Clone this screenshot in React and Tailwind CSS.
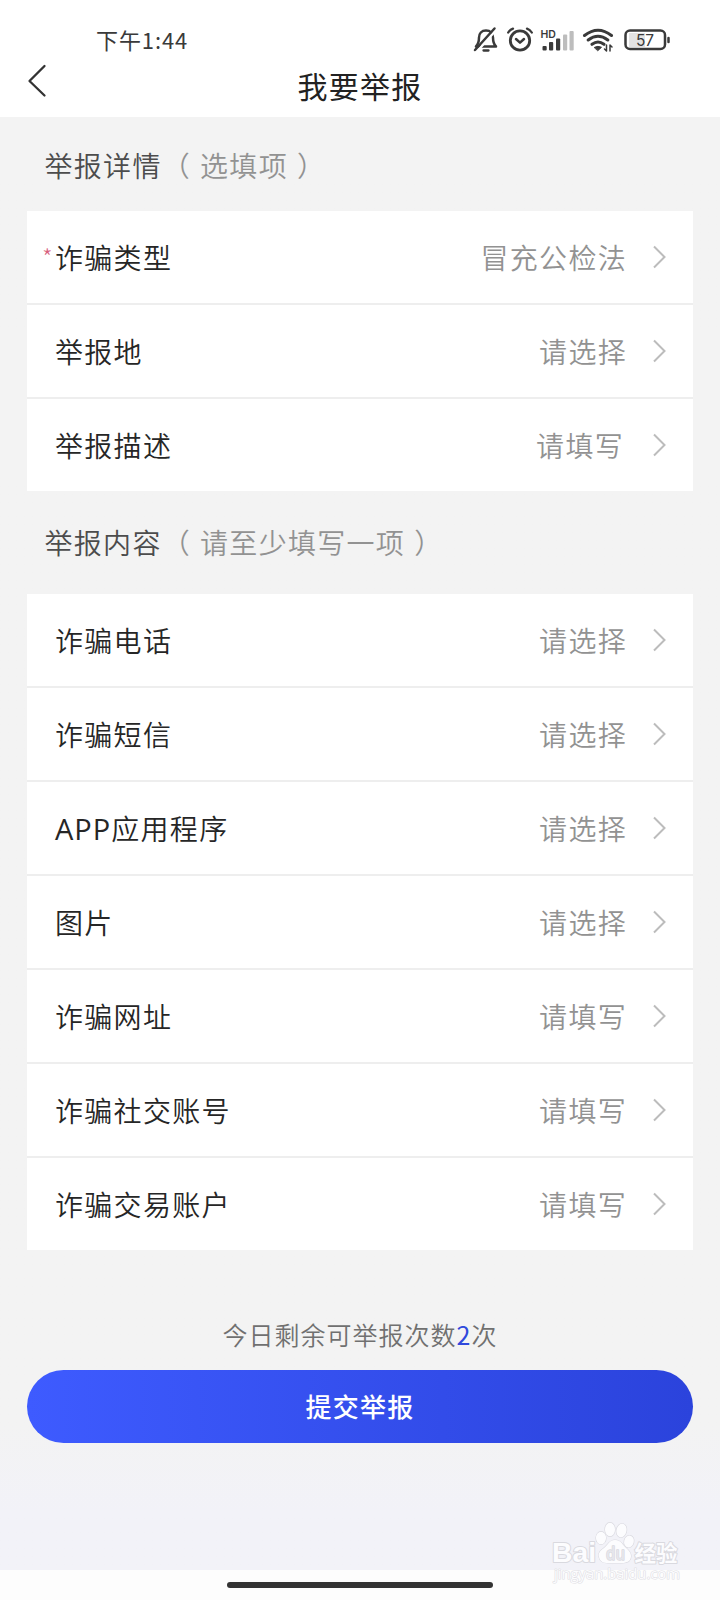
import React from "react";

const details = [
  { label: "诈骗类型", value: "冒充公检法", required: true },
  { label: "举报地", value: "请选择" },
  { label: "举报描述", value: "请填写", inset: true },
];

const contents = [
  { label: "诈骗电话", value: "请选择" },
  { label: "诈骗短信", value: "请选择" },
  { prefix: "APP", label: "应用程序", value: "请选择" },
  { label: "图片", value: "请选择" },
  { label: "诈骗网址", value: "请填写" },
  { label: "诈骗社交账号", value: "请填写" },
  { label: "诈骗交易账户", value: "请填写" },
];

function StatusIcons() {
  return (
    <svg width="200" height="30" viewBox="0 0 200 30" fill="none" stroke="#3a3a3a" strokeLinecap="round" strokeLinejoin="round">
      {/* muted bell */}
      <path d="M6 20.500h20c-2.500-2.500-3-4.500-3-9 0-4-2.500-7-7-7s-7 3-7 7c0 4.500-.5 6.500-3 9z" strokeWidth="2.500" />
      <path d="M13.500 24.500h5" strokeWidth="2.300" />
      <path d="M7 25.500 26 4" stroke="#fff" strokeWidth="2.500" />
      <path d="M5 24 24.500 2.500" strokeWidth="2.500" />
      {/* alarm clock */}
      <circle cx="50" cy="14.500" r="9.700" strokeWidth="2.800" />
      <path d="m46 13 4 3.700 4-3.700" strokeWidth="2.500" />
      <path d="M38.200 6.500q1.800-2.800 4.800-3.900M61.800 6.500q-1.800-2.800-4.800-3.900" strokeWidth="2.300" />
      {/* signal bars */}
      <g stroke="none">
        <rect x="72.500" y="20" width="4.200" height="4.500" rx="1" fill="#3a3a3a" />
        <rect x="79" y="16" width="4.200" height="8.500" rx="1" fill="#3a3a3a" />
        <rect x="86" y="12.500" width="4.200" height="12" rx="1" fill="#3a3a3a" />
        <rect x="93" y="8.500" width="4.200" height="16" rx="1" fill="#bdbdbd" />
        <rect x="99.500" y="5" width="4.200" height="19.500" rx="1" fill="#bdbdbd" />
        <text x="70.500" y="11.500" fill="#3a3a3a" fontSize="10.500" fontWeight="600" fontFamily="Inter, sans-serif">HD</text>
      </g>
      {/* wifi with data arrows */}
      <path d="M114.500 9.500q13.500-10.500 27 0M118.200 14q9.800-7.600 19.600 0M122 18.300q6-4.500 12 0" strokeWidth="3" />
      <path d="m124.500 21.300q3.500-2 7 0l-3.500 3.200z" fill="#3a3a3a" strokeWidth="1" />
      <path d="M136.500 19v6l-2-2M140 25v-6l2 2" strokeWidth="1.500" />
      {/* battery */}
      <rect x="159" y="7" width="16" height="14" fill="#e3e3e3" stroke="none" />
      <rect x="155.500" y="4.500" width="39.500" height="18.500" rx="4.500" strokeWidth="2.500" />
      <path d="M198.500 12v4" strokeWidth="2.500" />
      <text x="175" y="19.500" textAnchor="middle" fill="#3a3a3a" stroke="none" fontSize="15.500" fontWeight="400" fontFamily="Inter, sans-serif">57</text>
    </svg>
  );
}

function Row({ prefix, label, value, required, inset, last }) {
  return (
    <div className={last ? "flex h-[92px] items-center pr-[27px] pl-[16px]" : "flex h-[94px] items-center border-b-2 border-[#eeeeee] pr-[27px] pl-[16px]"}>
      <span className="-ml-px w-[13px] text-[24px] leading-[28px] font-light text-[#d8607c]">{required ? "*" : ""}</span>
      <span className="grow text-[28px] leading-[38px] font-[350] tracking-[1.3px] text-[#262626]">
        {prefix && <span className="font-['Open_Sans',sans-serif] text-[29px] font-normal tracking-[1px]">{prefix}</span>}
        {label}
      </span>
      <span className={inset ? "mr-[29px] text-[28px] leading-[40px] font-[350] tracking-[1.3px] text-[#929292]" : "mr-[26px] text-[28px] leading-[40px] font-[350] tracking-[1.3px] text-[#929292]"}>{value}</span>
      <svg width="13" height="24" viewBox="0 0 13 24" fill="none" stroke="#bcbcbc" strokeWidth="2">
        <path d="M1 1.500 11.500 12 1 22.500" />
      </svg>
    </div>
  );
}

function Card({ rows }) {
  return (
    <div className="mx-[27px] bg-white">
      {rows.map((row, i) => (
        <Row key={row.label} {...row} last={i === rows.length - 1} />
      ))}
    </div>
  );
}

function Heading({ title, note }) {
  return (
    <h2 className="pl-[44.500px] text-[28px] leading-[40px] font-[350] tracking-[1.3px] whitespace-pre text-[#4c4c4c]">
      {title}
      <span className="text-[#929292] [word-spacing:1.500px]">{`（ ${note} ）`}</span>
    </h2>
  );
}

function Watermark() {
  return (
    <div className="absolute right-[36px] bottom-[12px] h-[66px] w-[134px]">
      <svg width="134" height="66" viewBox="0 0 134 66" fill="#fcfcfe" stroke="#d9d9df" strokeWidth="1.200" fontFamily="'Open Sans', sans-serif" paintOrder="stroke" strokeLinejoin="round">
        <ellipse cx="51" cy="16" rx="5" ry="6.300" />
        <ellipse cx="60" cy="7.500" rx="5" ry="6.800" />
        <ellipse cx="71.500" cy="8.500" rx="5" ry="6.800" transform="rotate(12 71.500 8.500)" />
        <ellipse cx="79" cy="19.500" rx="4.800" ry="6" transform="rotate(15 79 19.500)" />
        <path d="M65 18c-6 0-7 5-11 8s-6 5-5 9c1 5 5 6 9 6h14c5 0 9-2 9-7 0-4-3-6-6-9s-4-7-10-7z" />
        <text x="2" y="40" fontSize="28" fontWeight="700" strokeWidth="2" fontFamily="'Liberation Sans', sans-serif" textLength="44" lengthAdjust="spacingAndGlyphs">Bai</text>
        <text x="56" y="38" fontSize="18" fontWeight="600" fill="#e6e6ec" strokeWidth="1.500" textLength="19" lengthAdjust="spacingAndGlyphs">du</text>
        <text x="84.500" y="39" fontSize="22" fontWeight="700" strokeWidth="2" fontFamily="'Noto Sans CJK SC', sans-serif" textLength="43" lengthAdjust="spacingAndGlyphs">经验</text>
        <text x="4" y="57" fontSize="14.500" strokeWidth="1.200" stroke="#e0e0e4" textLength="126" lengthAdjust="spacingAndGlyphs">jingyan.baidu.com</text>
      </svg>
    </div>
  );
}

export default function App() {
  return (
    <div className="relative flex h-[1600px] w-[720px] flex-col bg-[#f3f3f3] font-['Noto_Sans_CJK_SC',sans-serif]">
      <header className="h-[117px] bg-white">
        <div className="flex h-[60px] items-start justify-between pt-[23px] pr-[50px] pl-[96px]">
          <span className="text-[22px] leading-[32px] tracking-[0.9px] text-[#3a3a3a]">下午1:44</span>
          <div className="pt-[3px]">
            <StatusIcons />
          </div>
        </div>
        <div className="grid grid-cols-[100px_1fr_100px] items-start">
          <svg className="mt-[4px] ml-[26px]" width="22" height="34" viewBox="0 0 22 34" fill="none" stroke="#333333" strokeWidth="2.300" strokeLinecap="round" strokeLinejoin="round">
            <path d="M18.500 2 3.500 17l15 14.500" />
          </svg>
          <h1 className="pt-[3px] text-center text-[30px] leading-[44px] tracking-[1.3px] text-[#222222]">我要举报</h1>
        </div>
      </header>

      <main className="flex h-[1453px] flex-col bg-linear-to-b from-[#f3f3f3] from-90% to-[#f2f2f8] to-96%">
        <div className="h-[94px] pt-[28px]">
          <Heading title="举报详情" note="选填项" />
        </div>
        <Card rows={details} />
        <div className="h-[103px] pt-[31px]">
          <Heading title="举报内容" note="请至少填写一项" />
        </div>
        <Card rows={contents} />
        <p className="mt-[66px] text-center text-[25px] leading-[36px] font-[350] tracking-[1px] text-[#707070]">
          今日剩余可举报次数<span className="font-normal text-[#3049dc]">2</span>次
        </p>
        <button className="mx-[27px] mt-[18px] h-[73px] rounded-full bg-linear-to-r from-[#3e5bff] to-[#2b43dc] pb-[2px] text-[26px] font-medium tracking-[1.300px] text-white">
          提交举报
        </button>
      </main>

      <footer className="flex h-[30px] justify-center bg-[#fdfdfd] pt-[12px]">
        <div className="h-[6px] w-[266px] rounded-full bg-[#333333]" />
      </footer>
      <Watermark />
    </div>
  );
}
